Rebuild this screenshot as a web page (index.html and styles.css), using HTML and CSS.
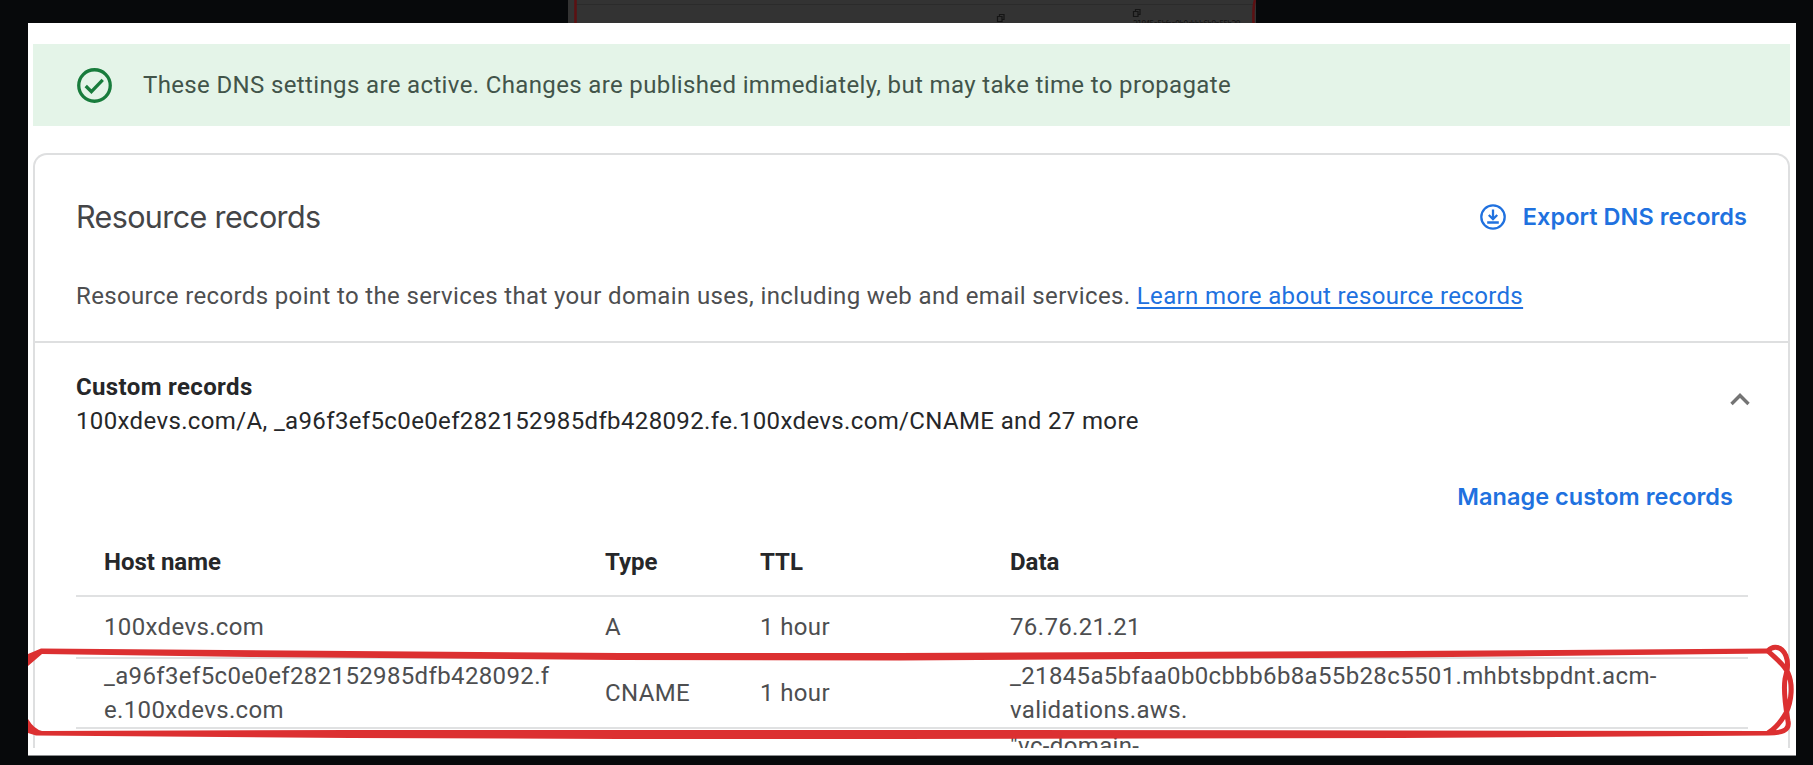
FILE: index.html
```html
<!DOCTYPE html>
<html lang="en">
<head>
<meta charset="utf-8">
<title>DNS settings</title>
<link rel="stylesheet" href="styles.css">
</head>
<body>
<div class="backdrop">
  <svg class="strip" width="688" height="23" viewBox="0 0 688 23">
    <rect width="688" height="23" fill="#333"/>
    <path d="M8 4.500H686" stroke="#2b2b2b"/>
    <path d="M7.500 0V23M687 0Q685 6 685.500 23" fill="none" stroke="#5c1012" stroke-width="2.500"/>
    <g fill="none" stroke="#151515" stroke-width="1.200">
      <path d="M429.500 16.500h4.500v5h-4.500zM431.500 16v-1.500h4.500v5h-1.500M565.500 11.500h4.500v5h-4.500zM567.500 11v-1.500h4.500v5h-1.500"/>
    </g>
    <text class="strip-text" x="565" y="27" textLength="108" lengthAdjust="spacing">21845a5bfaa0b0cbbb6b8a55b28</text>
  </svg>
  <main class="sheet">
    <div class="banner">
      <svg class="banner-icon" viewBox="0 0 34 34" width="35" height="35"><circle cx="17" cy="17" r="15.300"/><path d="M8.500 17.500l5.500 5.500L25 11.500"/></svg>
      <span>These DNS settings are active. Changes are published immediately, but may take time to propagate</span>
    </div>
    <section class="card">
      <header class="card-head">
        <h1>Resource records</h1>
        <a class="action export"><svg viewBox="0 0 26 26" width="26" height="26"><circle cx="13" cy="13" r="11.700"/><path d="M13 5.500v9M8.800 11l4.200 4.200 4.200-4.200M7.200 18.500h11.600"/></svg><span>Export DNS records</span></a>
      </header>
      <p class="intro">Resource records point to the services that your domain uses, including web and email services. <a class="link">Learn more about resource records</a></p>
      <div class="summary">
        <div><h2>Custom records</h2><p class="hosts">100xdevs.com/A, _a96f3ef5c0e0ef282152985dfb428092.fe.100xdevs.com/CNAME and 27 more</p></div>
        <svg class="chevron" viewBox="0 0 20 14" width="20" height="14"><path d="M1.500 12L10 3.500 18.500 12"/></svg>
      </div>
      <div class="manage"><a class="action"><span>Manage custom records</span></a></div>
      <div class="table">
        <div class="row head"><span>Host name</span><span>Type</span><span>TTL</span><span>Data</span></div>
        <div class="row one"><span>100xdevs.com</span><span>A</span><span>1 hour</span><span>76.76.21.21</span></div>
        <div class="row two"><span>_a96f3ef5c0e0ef282152985dfb428092.f<br>e.100xdevs.com</span><span>CNAME</span><span>1 hour</span><span>_21845a5bfaa0b0cbbb6b8a55b28c5501.mhbtsbpdnt.acm-<br>validations.aws.</span></div>
        <div class="row cut"><span></span><span></span><span></span><span>"vc-domain-</span></div>
      </div>
    </section>
    <svg class="marker" width="1768" height="110" viewBox="28 640 1768 110">
      <path class="fill" d="M28 654L41 648.500L620 653L900 653L1400 651L1768 648.500V653.500L1400 657.500L900 660.500L620 660L250 657L42 654L28 666Z"/>
      <path class="fill" d="M28 719Q34 729 42 731L350 730L900 730L1400 730.500L1768 731V735.500L1400 738L900 739L620 739L350 738L36 735.500L28 733Z"/>
      <path d="M1768 651C1773 645 1782 646 1786 656C1789 664 1787 671 1785 679C1783 693 1786 709 1788 721C1790 731 1781 733 1768 733M1768 651C1774 657 1784 664 1788 673C1793 684 1792 700 1786 713C1782 720 1775 729 1768 733"/>
    </svg>
  </main>
</div>
</body>
</html>
```
FILE: styles.css
```css
* { box-sizing: border-box; }
body { margin: 0; background: #07090b; font-family: Roboto, sans-serif; font-size: 24px; line-height: 34px; letter-spacing: 0.36px; color: #4d4e50; }
h1, h2, p { margin: 0; }
.backdrop { position: relative; width: 1813px; height: 765px; padding: 23px 0 0 28px; overflow: hidden; }
.strip { position: absolute; left: 568px; top: 0; }
.strip-text { font: 8px "DejaVu Sans", sans-serif; fill: #151515; }
.sheet { position: relative; width: 1768px; height: 733px; padding: 21px 6px 0 5px; background: #fff; border-bottom: 1px solid #8b8d8f; overflow: hidden; }
.banner { display: flex; align-items: center; height: 82px; padding-left: 44px; gap: 31px; background: #e4f4e8; color: #42544a; white-space: nowrap; }
.banner-icon { fill: none; stroke: #187c3c; stroke-width: 3.2; }
.card { height: 595px; margin-top: 27px; border: 2px solid #dedfe0; border-bottom: 0; border-radius: 14px 14px 0 0; overflow: hidden; white-space: nowrap; }
.card-head { display: flex; justify-content: space-between; align-items: center; height: 124px; padding: 0 41px; }
h1 { font: 400 30.5px/40px Inter, sans-serif; letter-spacing: -0.62px; color: #444547; }
.action { display: flex; align-items: center; gap: 17px; color: #2071df; font: 600 23.5px/34px Inter, sans-serif; letter-spacing: 0.03px; }
.action svg { fill: none; stroke: #2071df; stroke-width: 2.3; }
.intro { height: 64px; padding: 0 41px; border-bottom: 2px solid #dedfe0; }
.link { color: #2071df; text-decoration: underline; text-underline-offset: 3px; text-decoration-thickness: 2px; }
.summary { display: flex; justify-content: space-between; padding: 27px 38px 0 41px; color: #262729; }
.hosts { letter-spacing: 0.36px; }
h2 { font-size: 24px; line-height: 34px; font-weight: 700; }
.chevron { margin-top: 22px; fill: none; stroke: #747474; stroke-width: 3.4; }
.manage { display: flex; justify-content: flex-end; padding: 42px 55px 0 0; }
.table { margin: 14px 40px 0 41px; }
.row { display: grid; grid-template-columns: 501px 155px 250px 1fr; align-items: center; padding-left: 28px; border-bottom: 2px solid #e0e1e2; }
.head { height: 69px; font-weight: 700; letter-spacing: 0; color: #262729; }
.one { height: 62px; }
.two { height: 70px; }
.cut { height: 34px; border: 0; }
.marker { position: absolute; left: 0; top: 617px; }
.marker path { fill: none; stroke: #dc3031; stroke-width: 5; }
.marker .fill { fill: #dc3031; stroke: none; }
```
